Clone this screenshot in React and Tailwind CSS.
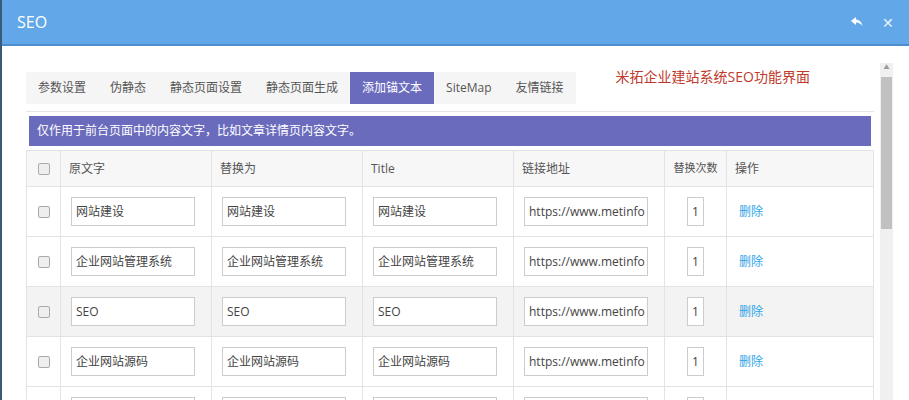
export default function App() {
  const rows = ["网站建设", "企业网站管理系统", "SEO", "企业网站源码", ""];
  const cols = ["w-[34px]", "w-[151px]", "w-[151px]", "w-[151px]", "w-[151px]", "w-[62px]", "flex-1"];
  const f = { fontFamily: '"Open Sans","Noto Sans CJK SC",sans-serif' };
  const inp = "h-[29px] border border-[#ccc] bg-white text-[12px] text-[#444] px-[4px] flex items-center overflow-hidden whitespace-nowrap";
  return (
    <div className="w-[909px] h-[400px] overflow-hidden bg-white border-l-2 border-[#3a5a7a] relative" style={f}>
      <div className="h-[46px] bg-[#62a8e8] border-b-2 border-[#4c8fcf] flex items-center px-[15px] text-white">
        <span className="text-[16px]">SEO</span>
        <div className="ml-auto flex gap-[18px] items-center text-[15px]">
          <svg width="14" height="12" viewBox="0 0 14 12"><path d="M6 1 L1 5 L6 9 V6.5 C9 6.5 11 7.5 12.5 10.5 C12 6.5 10 4 6 3.5 Z" fill="white" /></svg>
          <span className="text-[14px] text-[#e8f1fb]">✕</span>
        </div>
      </div>
      <div className="flex">
        <div className="w-[872px] pl-[24px] pr-[0px]">
          <div className="flex items-start mt-[26px]">
            <div className="flex bg-[#f5f5f5] h-[32px] text-[12px] text-[#555]">
              {["参数设置", "伪静态", "静态页面设置", "静态页面生成", "添加锚文本", "SiteMap", "友情链接"].map((t, i) => (
                <div key={t} className={`px-[12px] flex items-center whitespace-nowrap ${i === 4 ? "bg-[#6b6bbd] text-white" : ""}`}>{t}</div>
              ))}
            </div>
            <div className="ml-[40px] -mt-[6px] text-[14px] text-[#c0392b]">米拓企业建站系统SEO功能界面</div>
          </div>
          <div className="border-t border-[#e5e5e5] mt-[7px] pt-[4px] px-[3px]">
            <div className="h-[30px] bg-[#6b6bbd] text-white text-[12px] flex items-center px-[8px]">仅作用于前台页面中的内容文字，比如文章详情页内容文字。</div>
          </div>
          <div className="mt-[4px] border border-[#e3e3e3] text-[12px] text-[#555]">
            <div className="flex h-[36px] bg-[#f7f7f7] border-b border-[#e3e3e3]">
              {["", "原文字", "替换为", "Title", "链接地址", "替换次数", "操作"].map((t, i) => (
                <div key={i} className={`${cols[i]} ${i < 6 ? "border-r border-[#e3e3e3]" : ""} flex items-center whitespace-nowrap ${i === 0 ? "justify-center" : i === 5 ? "justify-center text-[11px]" : "px-[8px]"}`}>
                  {i === 0 ? <div className="w-[12px] h-[12px] border border-[#aaa] rounded-[2px] bg-[#eee]" /> : t}
                </div>
              ))}
            </div>
            {rows.map((r, ri) => (
              <div key={ri} className={`flex h-[50px] border-b border-[#e3e3e3] ${ri === 2 ? "bg-[#f3f3f3]" : "bg-white"}`}>
                <div className="w-[34px] border-r border-[#e3e3e3] flex items-center justify-center"><div className="w-[12px] h-[12px] border border-[#aaa] rounded-[2px] bg-[#eee]" /></div>
                {[0, 1, 2].map((c) => (
                  <div key={c} className="w-[151px] border-r border-[#e3e3e3] flex items-center px-[10px]"><div className={`${inp} w-[124px]`}>{r}</div></div>
                ))}
                <div className="w-[151px] border-r border-[#e3e3e3] flex items-center px-[10px]"><div className={`${inp} w-[124px]`}>{r && "https://www.metinfo"}</div></div>
                <div className="w-[62px] border-r border-[#e3e3e3] flex items-center justify-center"><div className={`${inp} w-[17px] justify-center px-0`}>{r && "1"}</div></div>
                <div className="flex-1 flex items-center px-[12px] text-[#2fa4e7]">{r && "删除"}</div>
              </div>
            ))}
          </div>
        </div>
        <div className="ml-[6px] mt-[17px] w-[13px] h-[340px] bg-[#f0f0f0] flex flex-col items-center">
          <div className="text-[6px] text-[#999] h-[14px]">▲</div>
          <div className="w-[11px] h-[152px] bg-[#c1c1c1]" />
        </div>
      </div>
    </div>
  );
}
